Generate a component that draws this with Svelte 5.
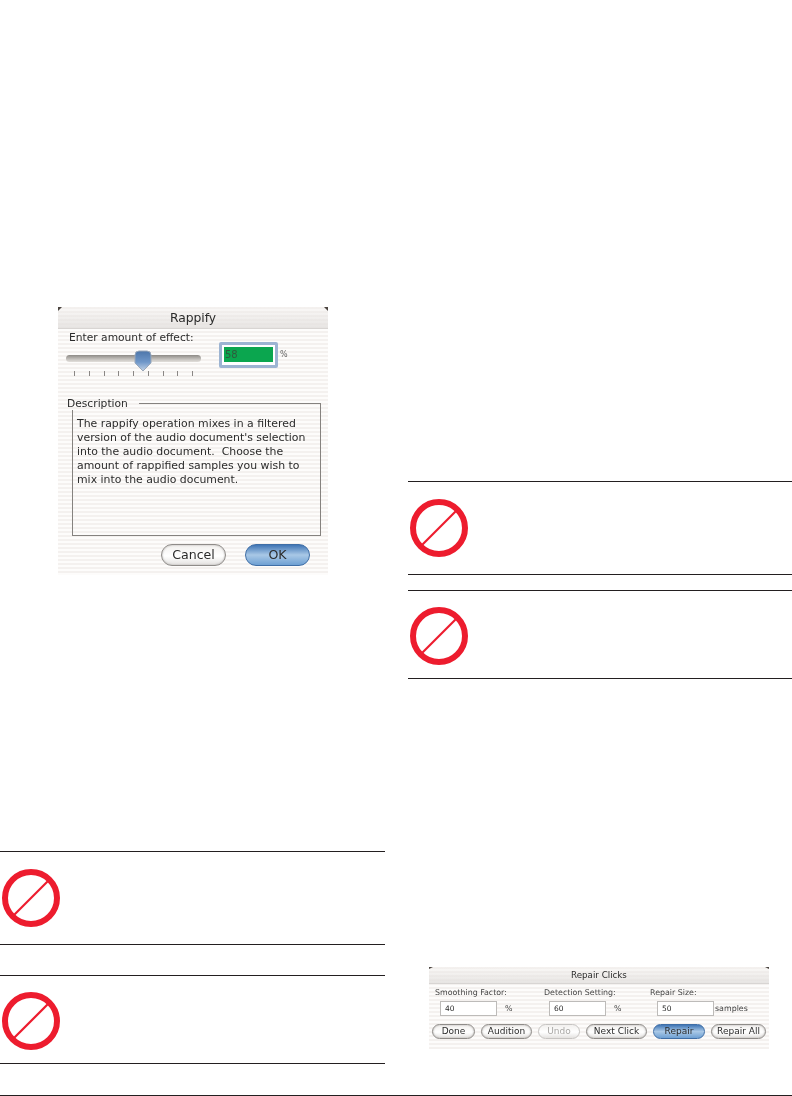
<script>
  const ticks = [0, 1, 2, 3, 4, 5, 6, 7, 8];
  const fields = [
    { label: "Smoothing Factor:", value: "40", unit: "%" },
    { label: "Detection Setting:", value: "60", unit: "%" },
    { label: "Repair Size:", value: "50", unit: "samples" },
  ];
  const buttons = [
    { text: "Done", w: 43 },
    { text: "Audition", w: 51 },
    { text: "Undo", w: 42, off: true },
    { text: "Next Click", w: 61 },
    { text: "Repair", w: 52, main: true },
    { text: "Repair All", w: 55 },
  ];
</script>

{#snippet notice(extra)}
  <div class="notice {extra}">
    <svg width="60" height="60" viewBox="0 0 60 60">
      <circle cx="30" cy="30" r="26" fill="none" stroke="#ed1c2e" stroke-width="6" />
      <line x1="13" y1="47" x2="47" y2="13" stroke="#ed1c2e" stroke-width="2.2" />
    </svg>
  </div>
{/snippet}

<div class="page">
  <div class="col left">
    <div class="rappify">
      <div class="title">Rappify</div>
      <div class="prompt">Enter amount of effect:</div>
      <div class="controls">
        <div class="slider">
          <div class="track"></div>
          <svg class="thumb" width="18" height="22" viewBox="0 0 18 22">
            <defs>
              <linearGradient id="thumbfill" x1="0" y1="0" x2="0" y2="1">
                <stop offset="0" stop-color="#4d76aa" />
                <stop offset="0.55" stop-color="#6f97c9" />
                <stop offset="1" stop-color="#c3d3e6" />
              </linearGradient>
            </defs>
            <path d="M1 5 Q1 1 5 1 H13 Q17 1 17 5 V13 L9 21 L1 13 Z" fill="url(#thumbfill)" stroke="#9aa8ba" />
          </svg>
          <div class="ticks">
            {#each ticks as t}<i></i>{/each}
          </div>
        </div>
        <div class="amount"><span>58</span></div>
        <span class="pct">%</span>
      </div>
      <fieldset>
        <legend>Description</legend>
        <p>The rappify operation mixes in a filtered version of the audio document's selection into the audio document.&nbsp; Choose the amount of rappified samples you wish to mix into the audio document.</p>
      </fieldset>
      <div class="actions">
        <div class="btn big">Cancel</div>
        <div class="btn big main">OK</div>
      </div>
    </div>
    {@render notice("first")}
    {@render notice("second")}
  </div>

  <div class="col right">
    {@render notice("first")}
    {@render notice("second")}
    <div class="repair">
      <div class="title small">Repair Clicks</div>
      <div class="fields">
        {#each fields as f}
          <div class="field">
            <div class="flabel">{f.label}</div>
            <div class="frow">
              <div class="finput">{f.value}</div>
              <span class="funit">{f.unit}</span>
            </div>
          </div>
        {/each}
      </div>
      <div class="btnrow">
        {#each buttons as b}
          <div class="btn" class:main={b.main} class:off={b.off} style="width: {b.w}px">{b.text}</div>
        {/each}
      </div>
    </div>
  </div>
</div>
<div class="footer"></div>

<style>
  :global(body) {
    margin: 0;
    background: #fff;
  }

  .page {
    display: flex;
    gap: 23px;
    height: 1095px;
    font-family: "DejaVu Sans", sans-serif;
    color: #2b2b2b;
  }

  .col {
    width: 385px;
    flex: none;
  }

  .left {
    padding-top: 307px;
  }

  .right {
    width: 384px;
    padding-top: 481px;
  }

  .footer {
    height: 1px;
    background: #231f20;
  }

  /* dialogs */
  .rappify,
  .repair {
    background: repeating-linear-gradient(#f4f1ef 0 2px, #fdfcfb 2px 4px);
    box-sizing: border-box;
    filter: blur(0.45px);
  }

  .rappify {
    width: 270px;
    height: 268px;
    margin-left: 58px;
  }

  .title {
    position: relative;
    height: 22px;
    line-height: 22px;
    text-align: center;
    font-size: 12.3px;
    background: linear-gradient(rgba(244, 241, 239, 0.3), rgba(226, 223, 221, 0.8));
    border-bottom: 1px solid #d8d5d3;
    box-sizing: border-box;
  }

  .title::before,
  .title::after {
    content: "";
    position: absolute;
    top: 0;
    border-top: 4px solid #4b4540;
  }

  .title::before {
    left: 0;
    border-right: 4px solid transparent;
  }

  .title::after {
    right: 0;
    border-left: 4px solid transparent;
  }

  .prompt {
    font-size: 10.7px;
    line-height: 13px;
    margin: 2px 0 0 11px;
  }

  .controls {
    display: flex;
    align-items: flex-start;
    margin: -9px 0 0 8px;
    height: 62px;
  }

  .slider {
    position: relative;
    width: 135px;
    padding-top: 20px;
    margin-right: 18px;
  }

  .track {
    height: 7px;
    border-radius: 4px;
    background: linear-gradient(#8d8a86, #c4c1bd 60%, #e2dfdb);
  }

  .thumb {
    position: absolute;
    left: 68px;
    top: 15px;
  }

  .ticks {
    display: flex;
    justify-content: space-between;
    margin: 9px 8px 0 8px;
  }

  .ticks i {
    width: 1px;
    height: 5px;
    background: #8a8785;
  }

  .amount {
    width: 59px;
    height: 26px;
    box-sizing: border-box;
    margin-top: 7px;
    border: 3px solid #9db4d2;
    padding: 2px;
    background: #fff;
    border-radius: 2px;
  }

  .amount span {
    display: block;
    height: 15px;
    line-height: 15px;
    padding-left: 1px;
    background: #0ba64f;
    color: #2f5a3c;
    font-size: 10px;
  }

  .pct {
    font-size: 8px;
    color: #666;
    margin: 15px 0 0 2px;
  }

  fieldset {
    margin: 0 7px 0 14px;
    height: 139px;
    box-sizing: border-box;
    border: 1px solid #85827f;
    padding: 0;
  }

  legend {
    font-size: 10.7px;
    line-height: 13px;
    margin-left: -6px;
    padding: 0 11px 0 0;
  }

  p {
    margin: 7px 8px 0 4px;
    font-size: 10.9px;
    line-height: 14px;
  }

  .actions {
    display: flex;
    justify-content: flex-end;
    gap: 19px;
    padding: 8px 18px 0 0;
  }

  .btn {
    height: 15px;
    line-height: 13px;
    box-sizing: border-box;
    border: 1px solid #8f8c89;
    border-radius: 8px;
    text-align: center;
    font-size: 9px;
    background: linear-gradient(#f2f0ee, #fff 55%, #e4e2e0);
    box-shadow: inset 0 0 2px #aaa8a6;
    white-space: nowrap;
  }

  .btn.big {
    width: 65px;
    height: 22px;
    line-height: 20px;
    font-size: 12.6px;
    border-radius: 11px;
  }

  .btn.main {
    background: linear-gradient(#3f75b5, #a9c8e6 50%, #6ea0d3);
    border-color: #3f6ea6;
    box-shadow: none;
  }

  .btn.off {
    color: #a9a7a5;
    border-color: #c6c4c2;
    box-shadow: none;
  }

  .repair {
    width: 340px;
    height: 82px;
    margin: 288px 0 0 21px;
  }

  .title.small {
    height: 17px;
    line-height: 17px;
    font-size: 8.7px;
  }

  .title.small::before,
  .title.small::after {
    border-top-width: 2px;
  }

  .fields {
    display: grid;
    grid-template-columns: 109px 106px auto;
    padding: 3px 0 0 6px;
  }

  .flabel {
    font-size: 7.9px;
    line-height: 11px;
    color: #444;
  }

  .frow {
    display: flex;
    align-items: center;
    gap: 8px;
    margin: 3px 0 0 5px;
  }

  .finput {
    width: 57px;
    height: 15px;
    box-sizing: border-box;
    border: 1px solid #bdbbb9;
    background: #fff;
    font-size: 7.5px;
    line-height: 13px;
    padding-left: 4px;
  }

  .field:nth-child(3) .frow {
    margin-left: 7px;
    gap: 1px;
  }

  .funit {
    font-size: 7.9px;
    color: #444;
  }

  .btnrow {
    display: flex;
    justify-content: space-between;
    margin: 8px 3px 0 3px;
  }

  /* warning blocks */
  .notice {
    display: flex;
    align-items: center;
    box-sizing: border-box;
    border-top: 1px solid #231f20;
    border-bottom: 1px solid #231f20;
    height: 94px;
    padding: 0 0 1px 1px;
  }

  .left .first {
    margin-top: 276px;
  }

  .second {
    margin-top: 15px;
    height: 89px;
    padding-top: 3px;
    padding-bottom: 0;
  }

  .left .second {
    margin-top: 30px;
  }
</style>
